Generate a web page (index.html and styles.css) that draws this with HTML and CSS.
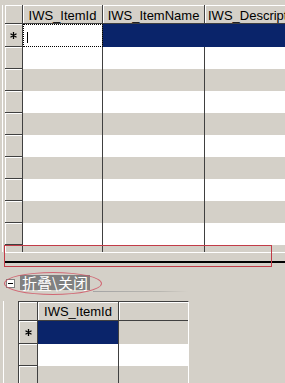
FILE: index.html
```html
<!DOCTYPE html>
<html>
<head>
<meta charset="utf-8">
<link rel="stylesheet" href="styles.css">
</head>
<body>
<div class="top">
  <div class="frame">
    <div class="row hdr">
      <div class="rh"></div>
      <div class="c c1">IWS_ItemId</div>
      <div class="c c2">IWS_ItemName</div>
      <div class="c c3">IWS_Descript</div>
    </div>
    <div class="row first">
      <div class="rh"><svg class="star" width="7" height="7" viewBox="0 0 7 7"><path d="M3.5 0V7M0.5 1.75L6.5 5.25M0.5 5.25L6.5 1.75" stroke="#000" stroke-width="1.3"/></svg></div>
      <div class="c c1 focus"><span class="caret"></span></div>
      <div class="c c2 sel"></div>
      <div class="c c3 sel"></div>
    </div>
    <div class="row w"><div class="rh"></div><div class="c c1"></div><div class="c c2"></div><div class="c c3"></div></div>
    <div class="row g"><div class="rh"></div><div class="c c1"></div><div class="c c2"></div><div class="c c3"></div></div>
    <div class="row w"><div class="rh"></div><div class="c c1"></div><div class="c c2"></div><div class="c c3"></div></div>
    <div class="row g"><div class="rh"></div><div class="c c1"></div><div class="c c2"></div><div class="c c3"></div></div>
    <div class="row w"><div class="rh"></div><div class="c c1"></div><div class="c c2"></div><div class="c c3"></div></div>
    <div class="row g"><div class="rh"></div><div class="c c1"></div><div class="c c2"></div><div class="c c3"></div></div>
    <div class="row w"><div class="rh"></div><div class="c c1"></div><div class="c c2"></div><div class="c c3"></div></div>
    <div class="row g"><div class="rh"></div><div class="c c1"></div><div class="c c2"></div><div class="c c3"></div></div>
    <div class="row w"><div class="rh"></div><div class="c c1"></div><div class="c c2"></div><div class="c c3"></div></div>
    <div class="row partial"><div class="rh"></div><div class="c c1"></div><div class="c c2"></div><div class="c c3"></div></div>
  </div>
  <div class="hsplit"></div>
</div>
<div class="bottom">
  <div class="labrow">
    <div class="minus"><span></span></div>
    <div class="label">折叠\关闭</div>
    <div class="rule"></div>
  </div>
  <div class="subframe">
    <div class="sgrid">
      <div class="srow shdr">
        <div class="rh"></div>
        <div class="s1">IWS_ItemId</div>
        <div class="s2"></div>
      </div>
      <div class="srow sfirst">
        <div class="rh"><svg class="star" width="7" height="7" viewBox="0 0 7 7"><path d="M3.5 0V7M0.5 1.75L6.5 5.25M0.5 5.25L6.5 1.75" stroke="#000" stroke-width="1.3"/></svg></div>
        <div class="s1 sel"></div>
        <div class="s2"></div>
      </div>
      <div class="srow sw">
        <div class="rh"></div>
        <div class="s1"></div>
        <div class="s2"></div>
      </div>
      <div class="srow sg">
        <div class="rh"></div>
        <div class="s1"></div>
        <div class="s2"></div>
      </div>
    </div>
  </div>
</div>
<div class="redbox"></div>
<div class="ellipse"></div>
</body>
</html>
```
FILE: styles.css
```css
* { box-sizing: border-box; }
html, body { margin: 0; padding: 0; }
body {
  width: 285px;
  height: 383px;
  overflow: hidden;
  position: relative;
  background: #d4d0c8;
  font-family: "Liberation Sans", Arial, sans-serif;
  font-size: 13px;
  color: #000;
}
.top { padding-top: 5px; width: 330px; }
.frame {
  margin-left: 2px;
  border-left: 1px solid #fff;
  padding-left: 2px;
}
.row { display: flex; height: 22px; }
.row.hdr { height: 19px; }
.row.first { height: 23px; }
.row.partial { height: 7px; }
.rh {
  flex: none;
  width: 18px;
  background: #d4d0c8;
  border-right: 1px solid #404040;
  border-bottom: 1px solid #404040;
  box-shadow: inset 1px 1px #fff;
  display: flex;
  align-items: center;
  justify-content: center;
}
.partial .rh { border-bottom: none; box-shadow: inset 1px 0 #fff; }
.c { flex: none; border-right: 1px solid #404040; }
.c1 { width: 80px; }
.c2 { width: 102px; }
.c3 { width: 130px; border-right: none; }
.hdr .c {
  background: #d4d0c8;
  border-bottom: 1px solid #404040;
  box-shadow: inset 1px 1px #fff;
  text-align: center;
  white-space: nowrap;
  padding-top: 2px;
  line-height: 17px;
}
.hdr .c3 { text-align: left; padding-left: 3px; }
.w .c { background: #fff; }
.g .c, .partial .c { background: #d4d0c8; }
.first .c1 {
  background: #fff;
  outline: 1px dotted #000;
  outline-offset: -1px;
  padding: 8px 0 0 4px;
}
.caret { display: block; width: 1px; height: 11px; background: #000; }
.sel { background: #0a246a; }
.first .c2 { border-right-color: #0a246a; }
.star { display: block; margin-top: 1px; }
.hsplit {
  margin-left: 4px;
  height: 11px;
  border-top: 1px solid #fff;
  border-bottom: 2px solid #000;
}
.bottom { padding-top: 12px; }
.labrow { display: flex; align-items: flex-start; height: 17px; padding-left: 6px; }
.minus {
  flex: none;
  width: 9px;
  height: 9px;
  margin-top: 4px;
  border: 1px solid #808080;
  background: #fff;
  display: flex;
  align-items: center;
  justify-content: center;
}
.minus span { display: block; width: 5px; height: 1px; background: #000; }
.label {
  flex: none;
  margin-left: 5px;
  height: 15px;
  padding: 0 2px;
  background: #808080;
  color: #fff;
  font-family: "Noto Sans CJK SC", "Liberation Sans", sans-serif;
  font-size: 15px;
  line-height: 15px;
  white-space: nowrap;
}
.rule {
  flex: none;
  width: 95px;
  height: 1px;
  margin-top: 16px;
  margin-left: 3px;
  background: linear-gradient(to right, #a4a4a4, #b8b6b0 70%, #d4d0c8);
}
.subframe {
  margin-top: 9px;
  margin-left: 3px;
  border-left: 1px solid #fff;
  padding-left: 14px;
  height: 100px;
}
.sgrid {
  width: 171px;
  border-left: 1px solid #404040;
  border-top: 1px solid #404040;
  border-right: 1px solid #fff;
}
.srow { display: flex; height: 22px; }
.srow.shdr { height: 19px; }
.srow.sfirst { height: 23px; }
.sgrid .rh { width: 19px; }
.s1 { flex: none; width: 81px; border-right: 1px solid #404040; }
.s2 { flex: 1; }
.shdr .s1, .shdr .s2 {
  background: #d4d0c8;
  border-bottom: 1px solid #404040;
  box-shadow: inset 1px 1px #fff;
  text-align: center;
  white-space: nowrap;
  padding-top: 1px;
  line-height: 17px;
}
.sfirst .s2 { background: #d4d0c8; }
.sfirst .s1.sel { background: #0a246a; }
.sw .s1, .sw .s2 { background: #fff; }
.sg .s1, .sg .s2 { background: #d4d0c8; }
.redbox {
  position: absolute;
  left: 4px;
  top: 245px;
  width: 268px;
  height: 22px;
  border: 1px solid #c23c48;
}
.ellipse {
  position: absolute;
  left: 4px;
  top: 272px;
  width: 98px;
  height: 23px;
  border: 1.5px solid rgba(208, 84, 100, 0.85);
  border-radius: 50%;
}
```
